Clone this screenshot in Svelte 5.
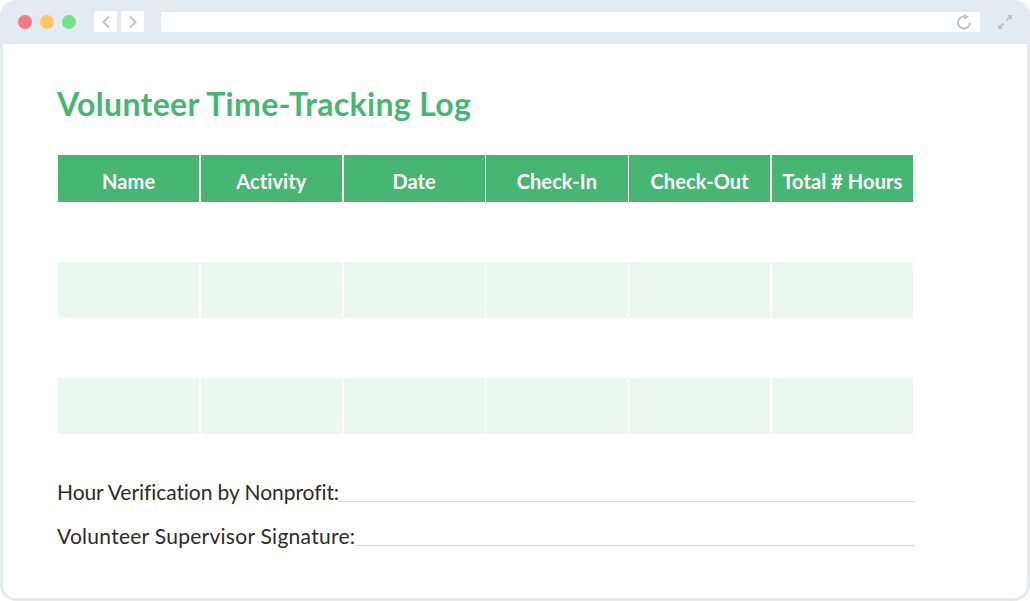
<script>
  const heads = ['Name', 'Activity', 'Date', 'Check-In', 'Check-Out', 'Total # Hours'];
  const rows = [false, true, false, true];
  const signoffs = ['Hour Verification by Nonprofit:', 'Volunteer Supervisor Signature:'];
</script>

<div class="window">
  <div class="bar">
    <div class="dots">
      <span class="dot red"></span>
      <span class="dot yellow"></span>
      <span class="dot green"></span>
    </div>
    <div class="navs">
      <button class="nav" aria-label="Back">
        <svg width="10" height="14" viewBox="0 0 10 14"><path d="M8 1.5 2.5 7 8 12.5" /></svg>
      </button>
      <button class="nav" aria-label="Forward">
        <svg width="10" height="14" viewBox="0 0 10 14"><path d="M2 1.5 7.5 7 2 12.5" /></svg>
      </button>
    </div>
    <div class="address">
      <svg width="16" height="16" viewBox="0 0 16 16">
        <path d="M14 8.5A6 6 0 1 1 9 2.6" />
        <path class="fill" d="M8.2 0 13 2.8 8.2 5.8Z" />
      </svg>
    </div>
    <svg class="expand" width="16" height="16" viewBox="0 0 16 16">
      <path d="M9.5 6.5 13.5 2.5M2.5 13.5 6.5 9.5" />
      <path class="fill" d="M10 1h5v5ZM1 10v5h5Z" />
    </svg>
  </div>

  <div class="page">
    <h1>Volunteer Time-Tracking Log</h1>

    <div class="table">
      {#each heads as h}
        <div class="head">{h}</div>
      {/each}
      {#each rows as tinted}
        {#each heads as h}
          <div class="cell" class:tinted></div>
        {/each}
      {/each}
    </div>

    <div class="signoffs">
      {#each signoffs as s}
        <div class="signoff"><span>{s}</span><i></i></div>
      {/each}
    </div>
  </div>
</div>

<style>
  :global(body) {
    margin: 0;
    background: #fff;
  }
  .window {
    box-sizing: border-box;
    width: 1030px;
    height: 601px;
    border: solid #e4ebf0;
    border-width: 0 3px 3px 3px;
    border-radius: 16px;
    overflow: hidden;
    background: #fff;
    font-family: "Lato", "Open Sans", sans-serif;
    display: flex;
    flex-direction: column;
  }
  .bar {
    height: 44px;
    flex: none;
    margin: 0 -3px;
    background: #e4ebf0;
    display: flex;
    align-items: center;
    padding: 0 17px 1px 17px;
    box-sizing: border-box;
  }
  .dots {
    display: flex;
    gap: 8px;
    margin-right: 18px;
    padding-left: 1px;
  }
  .dot {
    width: 14px;
    height: 14px;
    border-radius: 50%;
  }
  .red { background: #ff7a80; }
  .yellow { background: #ffc766; }
  .green { background: #72e58c; }
  .navs {
    display: flex;
    gap: 4px;
    margin-right: 17px;
  }
  .nav {
    width: 23px;
    height: 21px;
    padding: 0;
    border: 0;
    border-radius: 2px;
    background: #fff;
    display: flex;
    align-items: center;
    justify-content: center;
  }
  svg path {
    fill: none;
    stroke: #bcc5ca;
    stroke-width: 2;
  }
  svg path.fill {
    fill: #bcc5ca;
    stroke: none;
  }
  .address {
    flex: none;
    width: 819px;
    height: 20px;
    border-radius: 2px;
    background: #fff;
    display: flex;
    align-items: center;
    justify-content: flex-end;
    padding-right: 8px;
    box-sizing: border-box;
    margin-right: 17px;
  }
  .expand {
    flex: none;
  }
  .page {
    padding: 0 0 0 54px;
  }
  h1 {
    margin: 42px 0 0;
    font-size: 32px;
    line-height: 36px;
    font-weight: 700;
    color: #48b673;
    letter-spacing: 0.33px;
    white-space: nowrap;
  }
  .table {
    width: 855px;
    margin: 33px 0 0 1px;
    display: grid;
    grid-template-columns: repeat(6, 1fr);
    grid-template-rows: 47px 60px 56px 60px 56px;
    column-gap: 1.5px;
  }
  .head {
    background: #48b673;
    color: #fff;
    font-size: 20px;
    font-weight: 700;
    letter-spacing: 0.1px;
    display: flex;
    align-items: center;
    justify-content: center;
    padding-top: 5px;
    box-sizing: border-box;
    white-space: nowrap;
  }
  .cell.tinted {
    background: #ecf7f0;
  }
  .signoffs {
    margin-top: 45px;
    width: 858px;
    display: flex;
    flex-direction: column;
    gap: 18px;
  }
  .signoff {
    display: flex;
    align-items: flex-end;
    font-size: 21px;
    line-height: 26px;
    color: #2c2c2c;
    white-space: nowrap;
  }
  .signoff:last-child {
    letter-spacing: 0.27px;
  }
  .signoff:first-child {
    letter-spacing: -0.07px;
  }
  .signoff i {
    flex: 1;
    height: 1.5px;
    background: #d3d6d7;
    margin-bottom: 3px;
  }
</style>
